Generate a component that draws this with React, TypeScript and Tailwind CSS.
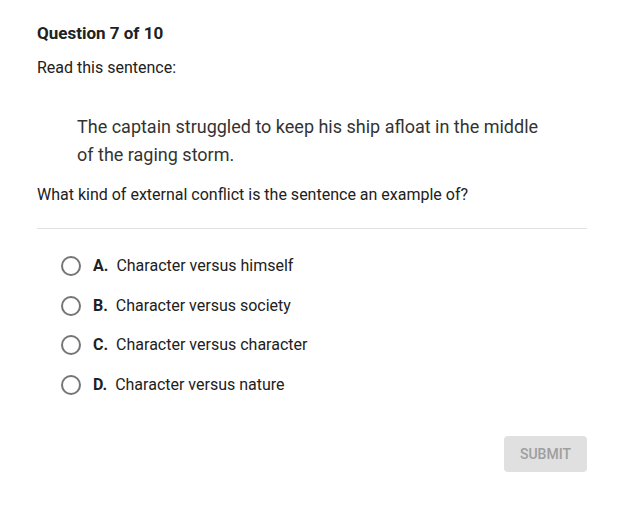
import React from "react";

const options = [
  { l: "A.", t: "Character versus himself" },
  { l: "B.", t: "Character versus society" },
  { l: "C.", t: "Character versus character" },
  { l: "D.", t: "Character versus nature" },
];

export default function App() {
  return (
    <div className="w-[627px] h-[514px] bg-white text-[#212121]" style={{ fontFamily: "Roboto, 'Liberation Sans', sans-serif" }}>
      <div className="w-[550px] ml-[37px] pt-[22px]">
        <div className="text-[17px] font-bold leading-[22px]">Question 7 of 10</div>
        <div className="mt-[13px] text-[16px] leading-[22px]">Read this sentence:</div>
        <div className="mt-[34px] pl-[40px] pr-[40px] text-[18px] leading-[28px] text-[#333]">
          The captain struggled to keep his ship afloat in the middle of the raging storm.
        </div>
        <div className="mt-[15px] text-[16px] leading-[22px]">What kind of external conflict is the sentence an example of?</div>
        <div className="mt-[22px] border-t border-[#e0e0e0]"></div>
        <div className="mt-[26px] flex flex-col gap-[17.7px] pl-[24px]">
          {options.map((o) => (
            <div key={o.l} className="flex items-center h-[22px]">
              <div className="w-[20px] h-[20px] rounded-full border-2 border-[#757575]"></div>
              <span className="ml-[12px] mr-[8px] text-[16px] font-bold">{o.l}</span>
              <span className="text-[16px]">{o.t}</span>
            </div>
          ))}
        </div>
        <div className="mt-[40px] flex justify-end">
          <div className="w-[83px] h-[36px] rounded-[4px] bg-[#e0e0e0] text-[#9e9e9e] text-[14px] font-medium flex items-center justify-center">
            SUBMIT
          </div>
        </div>
      </div>
    </div>
  );
}
